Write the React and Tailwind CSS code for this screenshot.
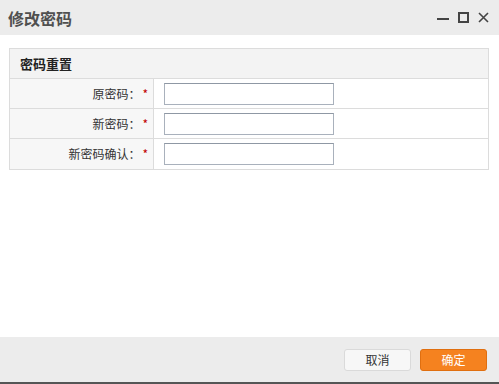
export default function App() {
  const font = { fontFamily: '"Noto Sans CJK SC", "Noto Sans", sans-serif' };
  const rows = ["原密码：", "新密码：", "新密码确认："];
  return (
    <div className="w-[499px] h-[384px] bg-white flex flex-col" style={font}>
      <div className="h-[35px] bg-[#ececec] flex items-center justify-between pl-[8px] pr-[10px] shrink-0">
        <div className="text-[16px] font-bold text-[#505050] leading-none">修改密码</div>
        <div className="flex items-center gap-[9px] text-[#444]">
          <svg width="12" height="12" viewBox="0 0 12 12"><rect x="0" y="6" width="12" height="2" fill="#444" /></svg>
          <svg width="11" height="11" viewBox="0 0 11 11"><rect x="1" y="1" width="9" height="9" fill="none" stroke="#444" strokeWidth="2" /></svg>
          <svg width="11" height="11" viewBox="0 0 11 11"><path d="M1 1L10 10M10 1L1 10" stroke="#444" strokeWidth="1.6" /></svg>
        </div>
      </div>
      <div className="flex-1 pt-[13px] px-[9px]">
        <div className="w-[480px] border border-[#dcdcdc]">
          <div className="h-[30px] bg-[#f3f3f3] flex items-center pl-[10px] text-[13px] font-bold text-[#222] border-b border-[#dcdcdc]">密码重置</div>
          {rows.map((r, i) => (
            <div key={i} className={`h-[30px] flex ${i < 2 ? "border-b border-[#dcdcdc]" : ""}`}>
              <div className="w-[144px] bg-[#f7f7f7] border-r border-[#dcdcdc] flex items-center justify-end pr-[5px] text-[12px] text-[#333]">
                {r}<span className="text-[#c00000] ml-[2px]">*</span>
              </div>
              <div className="flex items-center pl-[10px]">
                <div className="w-[170px] h-[22px] border border-[#a9b1bc] border-t-[#8f98a4] bg-white"></div>
              </div>
            </div>
          ))}
        </div>
      </div>
      <div className="h-[47px] bg-[#ececec] border-b-2 border-[#555] flex items-center justify-end pr-[12px] gap-[9px] shrink-0">
        <div className="w-[67px] h-[22px] bg-[#f7f7f7] border border-[#dadada] rounded-[3px] flex items-center justify-center text-[12px] text-[#333]">取消</div>
        <div className="w-[67px] h-[22px] bg-[#f5821f] border border-[#e06f10] rounded-[3px] flex items-center justify-center text-[12px] text-white">确定</div>
      </div>
    </div>
  );
}
